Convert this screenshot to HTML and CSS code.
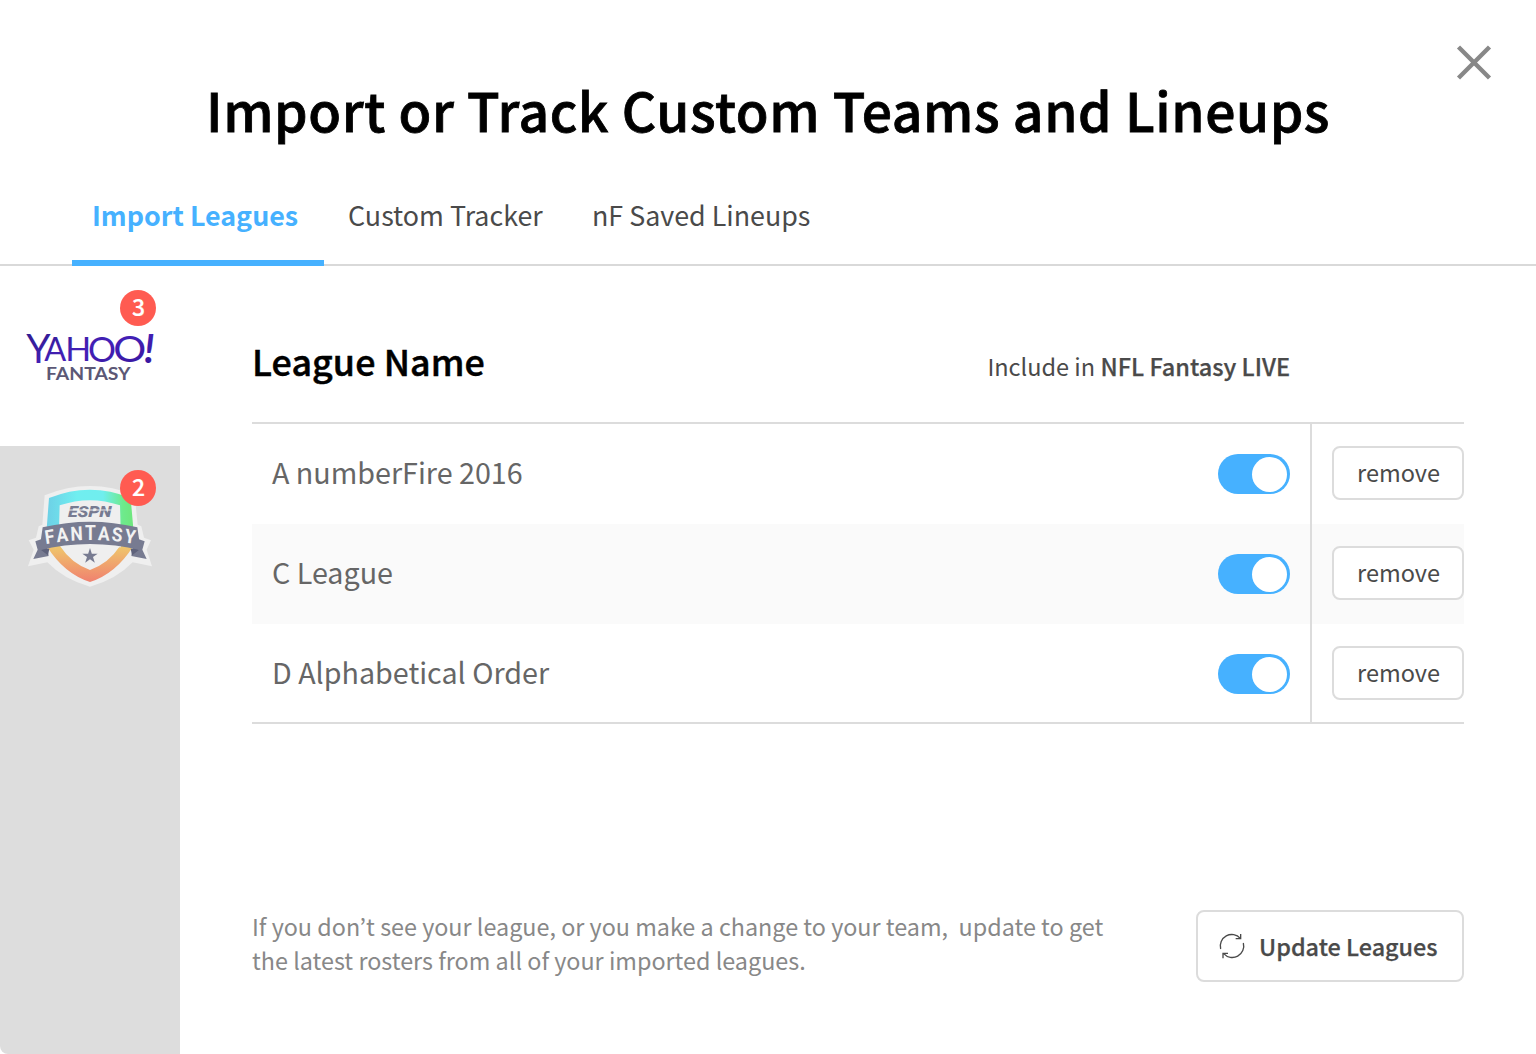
FILE: index.html
```html
<!DOCTYPE html>
<html lang="en">
<head>
<meta charset="utf-8">
<title>Import or Track Custom Teams and Lineups</title>
<link rel="stylesheet" href="styles.css">
</head>
<body>
<div class="modal">
  <header class="header">
    <h1 class="title">Import or Track Custom Teams and Lineups</h1>
    <button class="close" aria-label="Close">
      <svg width="36" height="36" viewBox="0 0 36 36"><path d="M2.500 3 33.500 34M33.500 3 2.500 34" stroke="#888" stroke-width="4.400" fill="none"/></svg>
    </button>
    <nav class="tabs">
      <a class="tab tab-active">Import Leagues</a>
      <a class="tab">Custom Tracker</a>
      <a class="tab tab-saved">nF Saved Lineups</a>
    </nav>
  </header>
  <div class="body">
    <aside class="sidebar">
      <a class="provider provider-active">
        <svg width="180" height="180" viewBox="0 -12 540 540">
          <defs>
            <linearGradient id="yahoo" x1="0" y1="0" x2="1" y2="1">
              <stop offset="0" stop-color="#2c1a86"/><stop offset=".5" stop-color="#4420b8"/><stop offset="1" stop-color="#35149a"/>
            </linearGradient>
          </defs>
          <text class="yahoo" fill="url(#yahoo)"><tspan x="79" y="280" font-size="119" textLength="73" lengthAdjust="spacingAndGlyphs">Y</tspan><tspan x="133" y="272" font-size="96" textLength="66" lengthAdjust="spacingAndGlyphs">A</tspan><tspan x="196" y="272" font-size="96" textLength="78" lengthAdjust="spacingAndGlyphs">H</tspan><tspan x="264" y="275" font-size="103" textLength="84" lengthAdjust="spacingAndGlyphs">O</tspan><tspan x="340" y="277" font-size="112" textLength="99" lengthAdjust="spacingAndGlyphs">O</tspan><tspan class="bang" x="432" y="280" font-size="118">!</tspan></text>
          <text class="yahoo-sub" x="138" y="330" font-size="50" textLength="254" lengthAdjust="spacingAndGlyphs">FANTASY</text>
        </svg>
        <span class="badge">3</span>
      </a>
      <a class="provider provider-espn">
        <svg width="160" height="140" viewBox="0 0 480 420">
          <defs>
            <linearGradient id="ring" x1="110" y1="0" x2="370" y2="0" gradientUnits="userSpaceOnUse">
              <stop offset="0" stop-color="#6dd0e6"/><stop offset=".35" stop-color="#70eef0"/><stop offset=".65" stop-color="#70eeee"/><stop offset=".88" stop-color="#6eea8c"/><stop offset="1" stop-color="#6ee67c"/>
            </linearGradient>
            <linearGradient id="vee" x1="0" y1="262" x2="0" y2="367" gradientUnits="userSpaceOnUse">
              <stop offset="0" stop-color="#efc56c"/><stop offset="1" stop-color="#f0806f"/>
            </linearGradient>
            <path id="arc" d="M119 253Q267 227 419 253"/>
          </defs>
          <path fill="#efefef" d="M104 106Q172 78 240 78Q308 78 374 106L383 194 394 199 402 233 423 241 410 269 426 319 368 307Q318 359 240 380Q162 359 112 307L54 319 71 269 56 241 78 233 86 199 97 194Z"/>
          <path fill="url(#ring)" d="M117 114Q240 64 362 114L370 206 332 206 330 136Q240 105 149 136L147 206 110 206Z"/>
          <path fill="url(#vee)" d="M110 258L150 258Q184 310 240 330Q296 310 330 258L370 258Q318 341 240 366Q162 341 110 258Z"/>
          <path fill="#efefef" d="M147 200H333V262H325L240 262 155 262Z"/>
          <path fill="#777b91" d="M76 244 104 234 116 288 70 297 83 269ZM404 244 376 234 364 288 410 297 397 269Z"/>
          <path fill="#5e627b" d="M93 270 104 264 118 266 114 286ZM387 270 376 264 362 266 366 286Z"/>
          <path fill="#777b91" d="M98 202Q240 168 382 202L392 271Q240 233 88 271Z"/>
          <text class="espn-fantasy" transform="scale(.9 1)"><textPath href="#arc" textLength="298" lengthAdjust="spacing">FANTASY</textPath></text>
          <text class="espn" transform="translate(174 172) skewX(-2)" textLength="130" lengthAdjust="spacingAndGlyphs">ESPN</text>
          <path stroke="#efefef" stroke-width="3" d="M172 150H308"/>
          <path fill="#777b91" d="M240 264 245.500 281H263L249 291 254.500 308 240 298 225.500 308 231 291 217 281H234.500Z"/>
        </svg>
        <span class="badge">2</span>
      </a>
    </aside>
    <main class="content">
      <div class="list-head">
        <h2 class="list-title">League Name</h2>
        <p class="include">Include in <b>NFL Fantasy LIVE</b></p>
      </div>
      <div class="table">
        <div class="row">
          <div class="league"><span class="name">A numberFire 2016</span><span class="toggle"><i></i></span></div>
          <div class="action"><button class="remove">remove</button></div>
        </div>
        <div class="row row-alt">
          <div class="league"><span class="name">C League</span><span class="toggle"><i></i></span></div>
          <div class="action"><button class="remove">remove</button></div>
        </div>
        <div class="row row-last">
          <div class="league"><span class="name">D Alphabetical Order</span><span class="toggle"><i></i></span></div>
          <div class="action"><button class="remove">remove</button></div>
        </div>
      </div>
      <footer class="footer">
        <p class="hint">If you don’t see your league, or you make a change to your team,&nbsp; update to get<br>the latest rosters from all of your imported leagues.</p>
        <button class="update">
          <svg width="28" height="28" viewBox="84 95 84 84" fill="none" stroke="#4a4a4a" stroke-width="4"><path d="M92 146A34.500 34.500 0 0 1 151 114M152 101V115H137M160 128A34.500 34.500 0 0 1 101 160M99 174V159H114"/></svg>
          <span>Update Leagues</span>
        </button>
      </footer>
    </main>
  </div>
</div>
</body>
</html>
```
FILE: styles.css
```css
* { box-sizing: border-box; }
body {
  margin: 0;
  background: #fff;
  color: #4a4a4a;
  font-family: "Noto Sans CJK KR", "Noto Sans", sans-serif;
}
h1, h2, p { margin: 0; }
button { font: inherit; color: inherit; padding: 0; background: #fff; }
.modal { width: 1536px; height: 1054px; display: flex; flex-direction: column; overflow: hidden; }

.header { position: relative; height: 266px; flex: none; display: flex; flex-direction: column; background: linear-gradient(#d9d9d9, #d9d9d9) bottom / 100% 2px no-repeat; }
.title { height: 180px; padding-top: 68px; line-height: 81px; font-size: 53.4px; font-weight: 500; color: #000; text-align: center; white-space: nowrap; letter-spacing: .59px; -webkit-text-stroke: .8px #000; }
.close { position: absolute; top: 44px; right: 44px; width: 36px; height: 36px; border: 0; }
.close svg { display: block; }
.tabs { display: flex; height: 86px; padding-left: 72px; font-size: 26.85px; line-height: 70px; white-space: nowrap; }
.tab { height: 86px; width: 244px; padding-left: 24px; }
.tab-active { width: 252px; padding-left: 20px; color: #46b1ff; font-weight: 700; border-bottom: 6px solid #46b1ff; }
.tab-saved { width: auto; }

.body { display: flex; flex: 1; }
.sidebar { width: 180px; background: #ddd; border-bottom-left-radius: 8px; }
.provider { position: relative; display: block; height: 180px; }
.provider svg { display: block; }
.provider-active { background: #fff; }
.provider-espn { padding: 14px 10px 0; }
.badge { position: absolute; left: 120px; top: 24px; width: 36px; height: 36px; border-radius: 50%; background: #ff5b51; color: #fff; font-size: 23px; font-weight: 500; line-height: 32px; text-align: center; padding-left: 1px; -webkit-text-stroke: .2px #fff; }
.yahoo { font-family: Lato, sans-serif; font-weight: 400; }
.yahoo .bang { font-weight: 700; font-style: italic; }
.yahoo-sub { font-family: Lato, sans-serif; font-weight: 700; fill: #5c5876; }
.espn-fantasy { font: 700 58px Roboto, sans-serif; fill: #f2f2f2; font-kerning: none; }
.espn { font: italic 900 46px Roboto, sans-serif; fill: #777b91; }

.content { flex: 1; padding: 0 72px; display: flex; flex-direction: column; }
.list-head { height: 156px; display: flex; justify-content: space-between; padding-right: 174px; white-space: nowrap; }
.list-title { font-size: 35.8px; letter-spacing: .1px; font-weight: 500; color: #000; line-height: 60px; padding-top: 64px; -webkit-text-stroke: .5px #000; }
.include { font-size: 23.5px; line-height: 40px; padding-top: 80px; }
.include b { font-weight: 500; -webkit-text-stroke: .25px #4a4a4a; }
.table { height: 302px; border-top: 2px solid #dcdcdc; border-bottom: 2px solid #dcdcdc; }
.row { display: flex; height: 100px; }
.row-alt { background: #fafafa; }
.row-last { height: 98px; }
.league { width: 1060px; border-right: 2px solid #dcdcdc; padding: 0 20px; display: flex; justify-content: space-between; }
.name { font-size: 28.7px; line-height: 95px; color: #666; white-space: nowrap; }
.toggle { width: 72px; height: 40px; margin-top: 30px; border-radius: 20px; background: #46b1ff; display: flex; justify-content: flex-end; padding: 2.5px 3px; }
.toggle i { width: 35px; height: 35px; border-radius: 50%; background: #fff; }
.action { padding: 22px 0 0 20px; }
.remove { display: block; width: 132px; height: 54px; border: 2px solid #dcdcdc; border-radius: 8px; font-size: 23.5px; line-height: 46px; padding: 0 0 2px 1px; }
.footer { margin-top: 186px; display: flex; justify-content: space-between; }
.hint { font-size: 23.35px; line-height: 34px; margin-top: -1px; color: #888; white-space: nowrap; }
.update { width: 268px; height: 72px; border: 2px solid #dcdcdc; border-radius: 8px; display: flex; align-items: center; padding-left: 20px; gap: 13px; font-size: 23.4px; font-weight: 500; white-space: nowrap; -webkit-text-stroke: .25px #4a4a4a; }
```
